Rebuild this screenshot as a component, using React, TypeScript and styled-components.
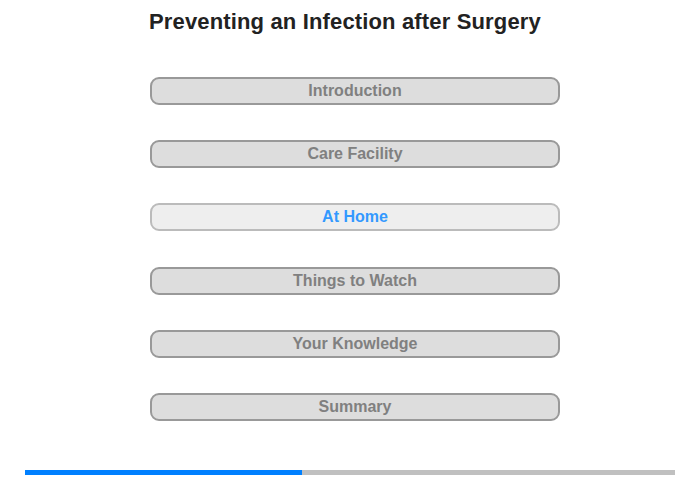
import React from 'react';
import styled, { createGlobalStyle } from 'styled-components';

const SECTIONS = ['Introduction', 'Care Facility', 'At Home', 'Things to Watch', 'Your Knowledge', 'Summary'];
const CURRENT = 2;
const PROGRESS = 277 / 650;

const GlobalStyle = createGlobalStyle`
  html, body {
    margin: 0;
    padding: 0;
    background: #fff;
    font-family: 'Liberation Sans', Arial, sans-serif;
  }
`;

const App = () => {
  return (
    <Page>
      <GlobalStyle />
      <Column>
        <Title>Preventing an Infection after Surgery</Title>
        <Menu>
          {SECTIONS.map((el, idx) => (
            <MenuButton key={idx} $active={idx === CURRENT}>
              {el}
            </MenuButton>
          ))}
        </Menu>
      </Column>
      <ProgressTrack>
        <ProgressFill style={{ width: `${PROGRESS * 100}%` }} />
      </ProgressTrack>
    </Page>
  );
};

export default App;

const Page = styled.div`
  width: 700px;
  height: 480px;
  display: flex;
  flex-direction: column;
  align-items: center;
`;

const Column = styled.div`
  width: 410px;
  margin-left: 10px;
  display: flex;
  flex-direction: column;
`;

const Title = styled.h1`
  margin: 0 0 0 -1px;
  padding-top: 9px;
  height: 26px;
  font-size: 22px;
  line-height: 26px;
  font-weight: bold;
  letter-spacing: 0.15px;
  color: #222;
  white-space: nowrap;
`;

const Menu = styled.div`
  display: flex;
  flex-direction: column;
  gap: 35.2px;
  margin-top: 42px;
`;

const MenuButton = styled.div<{ $active: boolean }>`
  box-sizing: border-box;
  height: 28px;
  border: 2px solid ${p => (p.$active ? '#bbbbbb' : '#999999')};
  border-radius: 9px;
  background: ${p => (p.$active ? '#eeeeee' : '#dddddd')};
  color: ${p => (p.$active ? '#3399ff' : '#808080')};
  font-size: 16px;
  font-weight: bold;
  line-height: 24px;
  text-align: center;
`;

const ProgressTrack = styled.div`
  margin-top: auto;
  margin-bottom: 5px;
  width: 650px;
  height: 5px;
  background: #c0c0c0;
`;

const ProgressFill = styled.div`
  height: 100%;
  background: #0080ff;
`;
